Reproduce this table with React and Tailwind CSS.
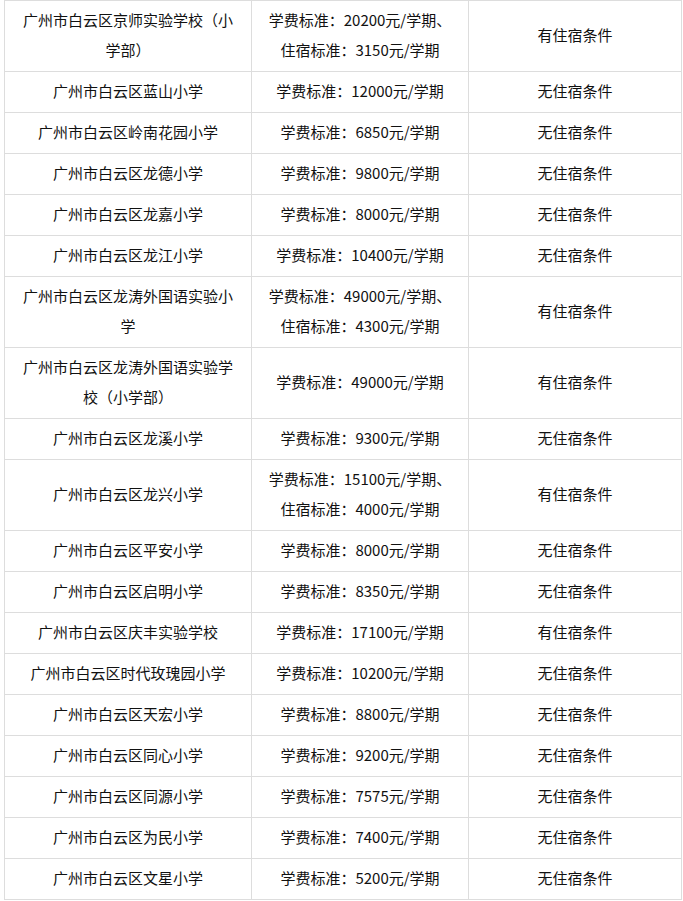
const ROWS = [
  ['广州市白云区京师实验学校（小学部）', ['学费标准：20200元/学期、', '住宿标准：3150元/学期'], '有住宿条件'],
  ['广州市白云区蓝山小学', ['学费标准：12000元/学期'], '无住宿条件'],
  ['广州市白云区岭南花园小学', ['学费标准：6850元/学期'], '无住宿条件'],
  ['广州市白云区龙德小学', ['学费标准：9800元/学期'], '无住宿条件'],
  ['广州市白云区龙嘉小学', ['学费标准：8000元/学期'], '无住宿条件'],
  ['广州市白云区龙江小学', ['学费标准：10400元/学期'], '无住宿条件'],
  ['广州市白云区龙涛外国语实验小学', ['学费标准：49000元/学期、', '住宿标准：4300元/学期'], '有住宿条件'],
  ['广州市白云区龙涛外国语实验学校（小学部）', ['学费标准：49000元/学期'], '有住宿条件'],
  ['广州市白云区龙溪小学', ['学费标准：9300元/学期'], '无住宿条件'],
  ['广州市白云区龙兴小学', ['学费标准：15100元/学期、', '住宿标准：4000元/学期'], '有住宿条件'],
  ['广州市白云区平安小学', ['学费标准：8000元/学期'], '无住宿条件'],
  ['广州市白云区启明小学', ['学费标准：8350元/学期'], '无住宿条件'],
  ['广州市白云区庆丰实验学校', ['学费标准：17100元/学期'], '有住宿条件'],
  ['广州市白云区时代玫瑰园小学', ['学费标准：10200元/学期'], '无住宿条件'],
  ['广州市白云区天宏小学', ['学费标准：8800元/学期'], '无住宿条件'],
  ['广州市白云区同心小学', ['学费标准：9200元/学期'], '无住宿条件'],
  ['广州市白云区同源小学', ['学费标准：7575元/学期'], '无住宿条件'],
  ['广州市白云区为民小学', ['学费标准：7400元/学期'], '无住宿条件'],
  ['广州市白云区文星小学', ['学费标准：5200元/学期'], '无住宿条件'],
]

export default function App() {
  const cell = 'border border-[#dddddd] pt-[4px] pb-[6px] text-center align-middle'
  return (
    <div
      className="bg-white min-h-[901px] pl-[4px] text-[15px] leading-[30px] text-[#111]"
      style={{ fontFamily: '"Noto Sans CJK SC", "Noto Sans", sans-serif' }}
    >
      <table className="w-[677px] border-collapse table-fixed">
        <colgroup>
          <col className="w-[247px]" />
          <col className="w-[217px]" />
          <col className="w-[213px]" />
        </colgroup>
        <tbody>
          {ROWS.map(([name, fees, lodging]) => (
            <tr key={name}>
              <td className={cell + ' px-3'}>{name}</td>
              <td className={cell + ' px-1'}>
                {fees.map(f => (
                  <div key={f}>{f}</div>
                ))}
              </td>
              <td className={cell + ' px-3'}>{lodging}</td>
            </tr>
          ))}
        </tbody>
      </table>
    </div>
  )
}
